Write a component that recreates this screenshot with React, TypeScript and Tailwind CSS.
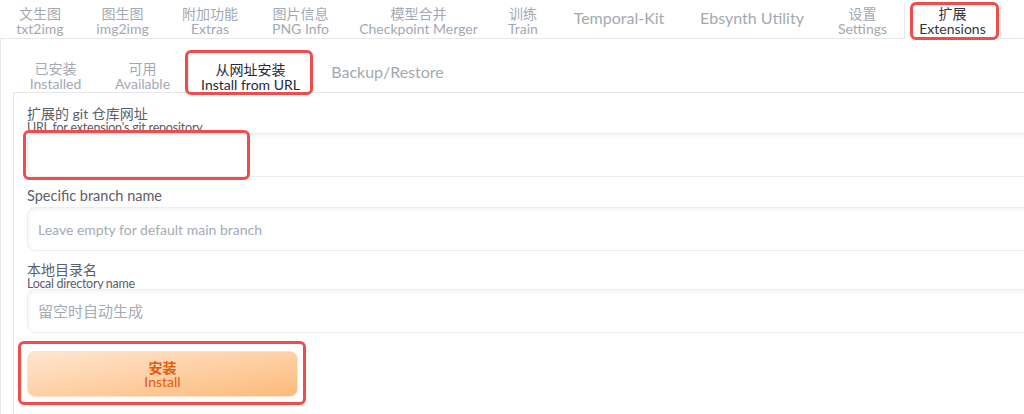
const topTabs = [
  { zh: '文生图', en: 'txt2img', w: 'w-[80px]' },
  { zh: '图生图', en: 'img2img', w: 'w-[85px]' },
  { zh: '附加功能', en: 'Extras', w: 'w-[90px]' },
  { zh: '图片信息', en: 'PNG Info', w: 'w-[91px]' },
  { zh: '模型合并', en: 'Checkpoint Merger', w: 'w-[145px]' },
  { zh: '训练', en: 'Train', w: 'w-[64px]' },
  { zh: '', en: 'Temporal-Kit', w: 'w-[128px]' },
  { zh: '', en: 'Ebsynth Utility', w: 'w-[138px]' },
  { zh: '设置', en: 'Settings', w: 'w-[83px]' },
  { zh: '扩展', en: 'Extensions', w: 'w-[97px]', active: true },
];

const subTabs = [
  { zh: '已安装', en: 'Installed', w: 'w-[83px]' },
  { zh: '可用', en: 'Available', w: 'w-[91px]' },
  { zh: '从网址安装', en: 'Install from URL', w: 'w-[125px]', active: true },
  { zh: '', en: 'Backup/Restore', w: 'w-[149px]' },
];

function Textbox({ placeholder, size = 'text-[14px]' }: { placeholder?: string; size?: string }) {
  return (
    <div className="relative flex h-[44px] items-center rounded-lg border border-[#ededed] bg-white pl-[10px] shadow-inner">
      {placeholder && <span className={`${size} text-[#a5abb5]`}>{placeholder}</span>}
    </div>
  );
}

export default function App() {
  return (
    <div className="relative h-[414px] w-full overflow-hidden bg-white font-['Lato','Noto_Sans_CJK_SC',sans-serif]">
      <div className="w-[1100px]">
        {/* top tabs */}
        <nav className="flex h-[39px] border-b border-[#e8e8e8]">
          {topTabs.map((t) =>
            t.zh ? (
              <div
                key={t.en}
                className={`${t.w} flex h-[38px] shrink-0 flex-col items-center pt-[6px] leading-[15px] ${
                  t.active
                    ? 'h-[39px] rounded-t-md border-x border-[#e8e8e8] bg-white text-[#333840]'
                    : 'text-[#a3a9b3]'
                }`}
              >
                <span className="text-[14px]">{t.zh}</span>
                <span className="text-[14px]">{t.en}</span>
              </div>
            ) : (
              <div
                key={t.en}
                className={`${t.w} flex h-[38px] shrink-0 items-center justify-center pb-[2px] text-[16px] text-[#a3a9b3]`}
              >
                {t.en}
              </div>
            )
          )}
        </nav>

        {/* extensions tab */}
        <div className="border-l border-[#e8e8e8] pl-3 pt-[11px]">
          <nav className="flex h-[43px] border-b border-[#e8e8e8] pl-px">
            {subTabs.map((t) =>
              t.zh ? (
                <div
                  key={t.en}
                  className={`${t.w} flex h-[42px] shrink-0 flex-col items-center pt-[11px] leading-[15px] ${
                    t.active
                      ? 'h-[43px] rounded-t-md border-x border-t border-[#e8e8e8] bg-white text-[#1f2937]'
                      : 'text-[#a3a9b3]'
                  }`}
                >
                  <span className="text-[14px]">{t.zh}</span>
                  <span className="text-[14px]">{t.en}</span>
                </div>
              ) : (
                <div
                  key={t.en}
                  className={`${t.w} flex h-[42px] shrink-0 items-center justify-center pt-[2px] text-[16px] text-[#a3a9b3]`}
                >
                  {t.en}
                </div>
              )
            )}
          </nav>

          <div className="flex flex-col border-l border-[#e8e8e8] px-[13px] pb-10 pt-[14px] text-[#5a606b]">
            <div className="h-[26px] leading-[14px]">
              <div className="text-[14px]">扩展的 git 仓库网址</div>
              <div className="text-[12.5px] tracking-[-0.2px]">URL for extension's git repository</div>
            </div>
            <Textbox />

            <div className="mt-3 h-[18px] text-[14.5px] leading-[14px]">Specific branch name</div>
            <Textbox placeholder="Leave empty for default main branch" />

            <div className="mt-3 h-[26px]">
              <div className="text-[14px] leading-[14px]">本地目录名</div>
              <div className="text-[12.5px] leading-[13px] tracking-[-0.3px]">Local directory name</div>
            </div>
            <Textbox placeholder="留空时自动生成" size="text-[15px]" />

            <button className="mt-[18px] flex h-[46px] w-[271px] flex-col items-center justify-center rounded-lg border border-[#fde2c8] bg-linear-to-br from-[#fee6cf] to-[#fcba78] text-[#ea580c]">
              <span className="h-[15px] text-[14px] font-bold leading-[15px]">安装</span>
              <span className="h-[14px] text-[14px] leading-[14px]">Install</span>
            </button>
          </div>
        </div>
      </div>

      {/* annotation boxes */}
      <div className="pointer-events-none absolute left-[910px] top-[2px] h-[38px] w-[89px] rounded-[6px] border-[3px] border-[#f14c4c]" />
      <div className="pointer-events-none absolute left-[185px] top-[50px] h-[45px] w-[128px] rounded-[6px] border-[3px] border-[#f14c4c]" />
      <div className="pointer-events-none absolute left-[23px] top-[130px] h-[50px] w-[227px] rounded-[6px] border-[3px] border-[#f14c4c]" />
      <div className="pointer-events-none absolute left-[18px] top-[341px] h-[64px] w-[288px] rounded-[6px] border-[3px] border-[#f14c4c]" />
    </div>
  );
}
